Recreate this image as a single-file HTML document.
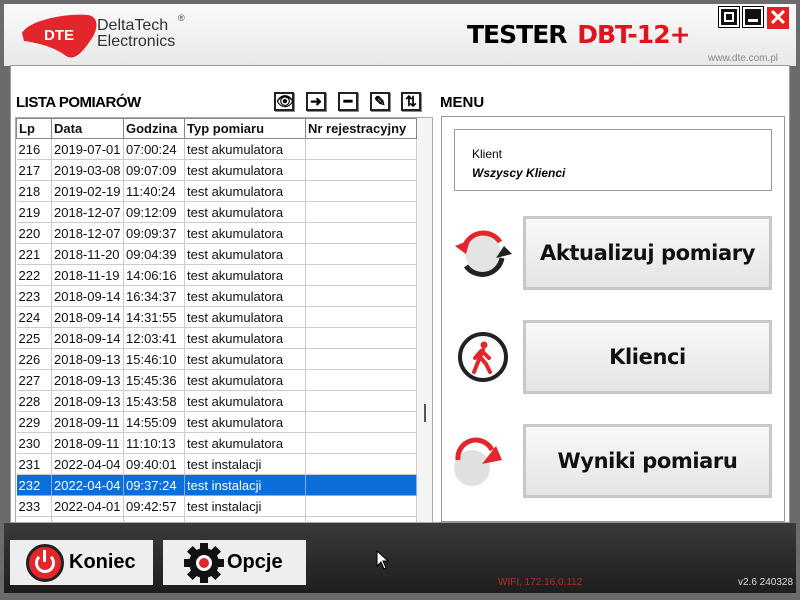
<!DOCTYPE html>
<html><head><meta charset="utf-8"><style>
*{margin:0;padding:0;box-sizing:border-box}
body{width:800px;height:600px;overflow:hidden;background:#6b6b6b;font-family:"Liberation Sans",sans-serif;position:relative}
.a{position:absolute}
#top{left:4px;top:4px;width:792px;height:62px;background:linear-gradient(#fafafa,#e8e8e8)}
#main{left:10px;top:65px;width:780px;height:458px;background:#fff;border:1px solid #999}
#bot{left:4px;top:523px;width:792px;height:70px;background:linear-gradient(#3a3a3a,#1e1e1e)}
table{border-collapse:collapse;font-size:13px;font-family:"Liberation Sans Narrow","Liberation Sans",sans-serif}
td{border-right:1px solid #ccc;border-bottom:1px solid #ccc;height:21px;padding:0 2px;white-space:nowrap;color:#111}
tr.h td{font-weight:bold;background:#fff;border:1px solid #888;height:20px}
tr.s td{background:#0a6fd8;color:#fff;border-color:#7fb0e8}
.tb{width:20px;height:19px;border:2px solid #222;background:#fff;box-shadow:1px 1px 0 #888;font-size:14px;text-align:center;line-height:15px;font-weight:bold}
.btn{background:linear-gradient(#f8f8f8,#e4e4e4);border:3px solid #c8c8c8;font-family:"DejaVu Sans",sans-serif;font-weight:bold;font-size:21px;letter-spacing:-0.4px;text-align:center;color:#111}
.bb{background:#eee;font-size:20px;font-weight:bold;font-family:"Liberation Sans Narrow","Liberation Sans",sans-serif}
</style></head><body>
<div class="a" id="top"></div>
<svg class="a" style="left:20px;top:11px" width="80" height="50" viewBox="0 0 80 50"><path d="M2 22 C10 8 50 2 68 4 C80 6 78 20 70 30 C62 42 54 50 46 45 C36 37 20 32 4 30 Z" fill="#e3262b"/><text x="24" y="29" font-family="Liberation Sans" font-weight="bold" font-size="15" fill="#fff">DTE</text></svg>
<div class="a" style="left:97px;top:18px;font-size:16px;line-height:16px;color:#333">DeltaTech<br>Electronics</div>
<div class="a" style="left:178px;top:13px;font-size:9px;color:#444">®</div>
<div class="a" style="left:467px;top:20px;font-size:25px;font-weight:bold;font-family:'DejaVu Sans',sans-serif;letter-spacing:-1px">TESTER <span style="color:#e0141c;margin-left:3px">DBT-12+</span></div>
<div class="a" style="left:708px;top:53px;font-size:10px;color:#888">www.dte.com.pl</div>
<div class="a" style="left:719px;top:7px;width:20px;height:20px;background:#111;border:2px solid #fff;outline:1px solid #000"><div style="margin:3px;width:10px;height:10px;border:2px solid #fff"></div></div>
<div class="a" style="left:743px;top:7px;width:20px;height:20px;background:#111;border:2px solid #fff;outline:1px solid #000"><div style="margin:10px 3px 0;height:3px;background:#fff"></div></div>
<div class="a" style="left:767px;top:7px;width:22px;height:22px;background:#e42020;color:#fff;font-size:22px;font-weight:bold;text-align:center;line-height:22px">✕</div>
<div class="a" id="main"></div>
<div class="a" style="left:16px;top:94px;font-size:15px;font-weight:bold;letter-spacing:-0.5px">LISTA POMIARÓW</div>
<div class="a tb" style="left:274px;top:92px">👁</div>
<div class="a tb" style="left:306px;top:92px">➜</div>
<div class="a tb" style="left:338px;top:92px">━</div>
<div class="a tb" style="left:370px;top:92px">✎</div>
<div class="a tb" style="left:401px;top:92px">⇅</div>
<div class="a" style="left:440px;top:94px;font-size:15px;font-weight:bold">MENU</div>
<div class="a" style="left:15px;top:117px;width:418px;height:406px;background:#f4f4f4;border:1px solid #aaa;overflow:hidden">
<table style="background:#fff;width:401px">
<tr class="h"><td style="width:35px">Lp</td><td style="width:72px">Data</td><td style="width:61px">Godzina</td><td style="width:121px">Typ pomiaru</td><td>Nr rejestracyjny</td></tr>
<tr><td>216</td><td>2019-07-01</td><td>07:00:24</td><td>test akumulatora</td><td></td></tr>
<tr><td>217</td><td>2019-03-08</td><td>09:07:09</td><td>test akumulatora</td><td></td></tr>
<tr><td>218</td><td>2019-02-19</td><td>11:40:24</td><td>test akumulatora</td><td></td></tr>
<tr><td>219</td><td>2018-12-07</td><td>09:12:09</td><td>test akumulatora</td><td></td></tr>
<tr><td>220</td><td>2018-12-07</td><td>09:09:37</td><td>test akumulatora</td><td></td></tr>
<tr><td>221</td><td>2018-11-20</td><td>09:04:39</td><td>test akumulatora</td><td></td></tr>
<tr><td>222</td><td>2018-11-19</td><td>14:06:16</td><td>test akumulatora</td><td></td></tr>
<tr><td>223</td><td>2018-09-14</td><td>16:34:37</td><td>test akumulatora</td><td></td></tr>
<tr><td>224</td><td>2018-09-14</td><td>14:31:55</td><td>test akumulatora</td><td></td></tr>
<tr><td>225</td><td>2018-09-14</td><td>12:03:41</td><td>test akumulatora</td><td></td></tr>
<tr><td>226</td><td>2018-09-13</td><td>15:46:10</td><td>test akumulatora</td><td></td></tr>
<tr><td>227</td><td>2018-09-13</td><td>15:45:36</td><td>test akumulatora</td><td></td></tr>
<tr><td>228</td><td>2018-09-13</td><td>15:43:58</td><td>test akumulatora</td><td></td></tr>
<tr><td>229</td><td>2018-09-11</td><td>14:55:09</td><td>test akumulatora</td><td></td></tr>
<tr><td>230</td><td>2018-09-11</td><td>11:10:13</td><td>test akumulatora</td><td></td></tr>
<tr><td>231</td><td>2022-04-04</td><td>09:40:01</td><td>test instalacji</td><td></td></tr>
<tr class="s"><td>232</td><td>2022-04-04</td><td>09:37:24</td><td>test instalacji</td><td></td></tr>
<tr><td>233</td><td>2022-04-01</td><td>09:42:57</td><td>test instalacji</td><td></td></tr>
<tr><td>234</td><td></td><td></td><td></td><td></td></tr>
</table>
<div class="a" style="left:408px;top:286px;width:2px;height:18px;background:#555"></div>
</div>
<div class="a" style="left:441px;top:116px;width:344px;height:406px;border:1px solid #999"></div>
<div class="a" style="left:454px;top:129px;width:318px;height:62px;border:1px solid #999;font-size:12px;padding:15px 0 0 17px;line-height:19px">Klient<br><b><i>Wszyscy Klienci</i></b></div>
<div class="a btn" style="left:523px;top:216px;width:249px;height:74px;line-height:68px">Aktualizuj pomiary</div>
<div class="a btn" style="left:523px;top:320px;width:249px;height:74px;line-height:68px">Klienci</div>
<div class="a btn" style="left:523px;top:424px;width:249px;height:74px;line-height:68px">Wyniki pomiaru</div>
<svg class="a" style="left:450px;top:226px" width="70" height="54" viewBox="0 0 70 54"><circle cx="33" cy="28" r="18" fill="#e4e4e4"/><path d="M14 22 A20 20 0 0 1 50 16" stroke="#e3262b" stroke-width="5" fill="none"/><path d="M5 20 L20 14 L16 28 Z" fill="#e3262b"/><path d="M52 32 A20 20 0 0 1 16 40" stroke="#222" stroke-width="5" fill="none"/><path d="M62 28 L46 32 L54 20 Z" fill="#222"/></svg>
<svg class="a" style="left:456px;top:332px" width="54" height="52"><circle cx="27" cy="25" r="23" fill="#fff" stroke="#222" stroke-width="4"/><circle cx="28" cy="13" r="3.5" fill="#e3262b"/><path d="M27 18 L22 30 L18 40 M25 26 L30 32 L34 40 M26 19 L33 26 M25 19 L19 26" stroke="#e3262b" stroke-width="4" fill="none" stroke-linecap="round"/></svg>
<svg class="a" style="left:452px;top:434px" width="60" height="56"><circle cx="20" cy="34" r="18" fill="#e0e0e0"/><path d="M6 26 A18 18 0 0 1 40 16" stroke="#e3262b" stroke-width="5" fill="none"/><path d="M30 30 L50 26 L44 12 Z" fill="#e3262b"/></svg>
<div class="a" id="bot"></div>
<div class="a bb" style="left:10px;top:540px;width:143px;height:45px"><div class="a" style="left:16px;top:4px;width:38px;height:38px;border-radius:50%;background:#e3262b;border:3px solid #222"></div><div class="a" style="left:25px;top:13px;width:20px;height:20px;border-radius:50%;border:3px solid #fff;border-top-color:transparent"></div><div class="a" style="left:33px;top:10px;width:3px;height:12px;background:#fff"></div><span class="a" style="left:59px;top:11px">Koniec</span></div>
<div class="a bb" style="left:163px;top:540px;width:143px;height:45px"><svg class="a" style="left:20px;top:2px" width="42" height="42" viewBox="0 0 42 42"><g fill="#111"><circle cx="21" cy="21" r="15"/><rect x="17" y="1" width="8" height="40"/><rect x="1" y="17" width="40" height="8"/><rect x="17" y="1" width="8" height="40" transform="rotate(45 21 21)"/><rect x="17" y="1" width="8" height="40" transform="rotate(-45 21 21)"/></g><circle cx="21" cy="21" r="8" fill="#fff"/><circle cx="21" cy="21" r="5" fill="#e3262b"/></svg><span class="a" style="left:64px;top:11px">Opcje</span></div>
<svg class="a" style="left:376px;top:550px" width="14" height="20"><path d="M1 1 L1 16 L5 12 L8 19 L10 18 L7 11 L12 11 Z" fill="#fff" stroke="#000"/></svg>
<div class="a" style="left:498px;top:577px;font-size:10px;color:#c0262b;font-family:'Liberation Sans Narrow',sans-serif">WIFI, 172.16.0.112</div>
<div class="a" style="left:738px;top:577px;font-size:10px;color:#ddd;font-family:'Liberation Sans Narrow',sans-serif">v2.6 240328</div>
</body></html>
